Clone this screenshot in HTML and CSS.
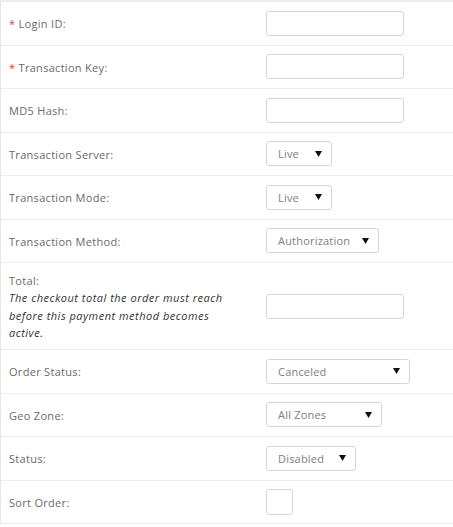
FILE: index.html
```html
<!DOCTYPE html>
<html>
<head>
<meta charset="utf-8">
<link rel="stylesheet" href="styles.css">
</head>
<body>
<div class="form">
  <div class="row"><div class="label"><span class="req">*</span> Login ID:</div><div class="field"><div class="input"></div></div></div>
  <div class="row"><div class="label"><span class="req">*</span> Transaction Key:</div><div class="field"><div class="input"></div></div></div>
  <div class="row"><div class="label">MD5 Hash:</div><div class="field"><div class="input"></div></div></div>
  <div class="row"><div class="label">Transaction Server:</div><div class="field"><div class="select w-live"><span>Live</span><svg class="arrow" width="7" height="6" viewBox="0 0 7 6"><polygon points="0,0 7,0 3.5,6" fill="#111"/></svg></div></div></div>
  <div class="row"><div class="label">Transaction Mode:</div><div class="field"><div class="select w-live"><span>Live</span><svg class="arrow" width="7" height="6" viewBox="0 0 7 6"><polygon points="0,0 7,0 3.5,6" fill="#111"/></svg></div></div></div>
  <div class="row"><div class="label">Transaction Method:</div><div class="field"><div class="select w-auth"><span>Authorization</span><svg class="arrow" width="7" height="6" viewBox="0 0 7 6"><polygon points="0,0 7,0 3.5,6" fill="#111"/></svg></div></div></div>
  <div class="row row-total"><div class="label">Total:<div class="help">The checkout total the order must reach before this payment method becomes active.</div></div><div class="field"><div class="input"></div></div></div>
  <div class="row"><div class="label">Order Status:</div><div class="field"><div class="select w-status"><span>Canceled</span><svg class="arrow" width="7" height="6" viewBox="0 0 7 6"><polygon points="0,0 7,0 3.5,6" fill="#111"/></svg></div></div></div>
  <div class="row"><div class="label">Geo Zone:</div><div class="field"><div class="select w-zone"><span>All Zones</span><svg class="arrow" width="7" height="6" viewBox="0 0 7 6"><polygon points="0,0 7,0 3.5,6" fill="#111"/></svg></div></div></div>
  <div class="row"><div class="label">Status:</div><div class="field"><div class="select w-dis"><span>Disabled</span><svg class="arrow" width="7" height="6" viewBox="0 0 7 6"><polygon points="0,0 7,0 3.5,6" fill="#111"/></svg></div></div></div>
  <div class="row"><div class="label">Sort Order:</div><div class="field"><div class="input small"></div></div></div>
</div>
</body>
</html>
```

FILE: styles.css
```css
html, body {
  margin: 0;
  padding: 0;
  background: #fff;
}
body {
  font-family: "Open Sans", Lato, sans-serif;
  font-size: 11px;
  color: #666;
}
.form {
  border-top: 2px solid #ececec;
  border-left: 1px solid #e6e6e6;
  width: 452px;
}
.row {
  display: grid;
  grid-template-columns: 265px 1fr;
  align-items: center;
  height: 43.5px;
  border-bottom: 1px solid #ececec;
  box-sizing: border-box;
}
.row-total {
  height: 87px;
}
.label {
  padding-left: 8px;
  padding-top: 1px;
  color: #6a6a6a;
  line-height: 17.5px;
  letter-spacing: 0.3px;
}
.req {
  color: #f33;
}
.help {
  font-style: italic;
  color: #333;
  width: 224px;
  letter-spacing: 0.5px;
}
.field {
  display: flex;
  align-items: center;
}
.input {
  width: 138px;
  height: 25px;
  border: 1px solid #d6d6d6;
  border-radius: 3px;
  box-sizing: border-box;
}
.input.small {
  width: 27px;
  height: 26px;
}
.select {
  height: 25px;
  border: 1px solid #d6d6d6;
  border-radius: 3px;
  box-sizing: border-box;
  display: flex;
  align-items: center;
  justify-content: space-between;
  padding: 0 9px 0 11px;
  color: #808080;
  letter-spacing: 0.2px;
}
.arrow {
  display: block;
}
.w-live { width: 66px; }
.w-auth { width: 113px; }
.w-status { width: 144px; }
.w-zone { width: 116px; }
.w-dis { width: 90px; }
```
